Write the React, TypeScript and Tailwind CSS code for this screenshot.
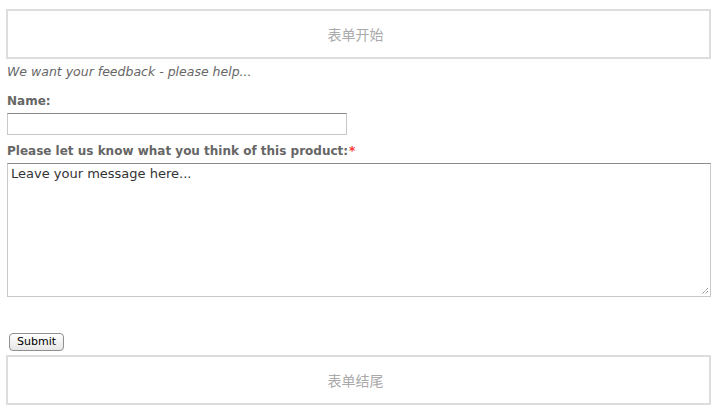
import React from "react";

export default function App() {
  return (
    <div className="w-[717px] h-[414px] bg-white overflow-hidden" style={{ fontFamily: '"DejaVu Sans", "Noto Sans CJK SC", sans-serif' }}>
      <div className="px-[6px] pt-[9px]">
        <div className="h-[50px] border-2 border-[#dddddd] flex items-center justify-center text-[14px] text-[#aaaaaa] w-[705px]" style={{ fontFamily: '"Noto Sans CJK SC", sans-serif' }}>
          <span className="mr-[6px]">表单开始</span>
        </div>
        <div className="pl-[1px] mt-[5px] text-[12.5px] leading-[16px] italic text-[#666666]">
          We want your feedback - please help...
        </div>
        <div className="pl-[1px] mt-[14px] text-[12px] leading-[15px] font-bold text-[#666666]">Name:</div>
        <div className="pl-[1px] mt-[4px]">
          <div className="w-[340px] h-[22px] border border-[#c8c8c8] border-t-[#8a8a8a]"></div>
        </div>
        <div className="pl-[1px] mt-[9px] text-[12px] leading-[15px] font-bold text-[#666666] flex">
          <span>Please let us know what you think of this product:</span>
          <span className="text-[#ff3333] ml-[1px]">*</span>
        </div>
        <div className="pl-[1px] mt-[4px]">
          <div className="relative w-[704px] h-[134px] border border-[#c8c8c8] border-t-[#8a8a8a] px-[3px] pt-[2px] text-[13px] leading-[16px] text-[#333333]">
            Leave your message here...
            <svg className="absolute right-[1px] bottom-[1px]" width="9" height="9" viewBox="0 0 9 9">
              <path d="M8 2 L2 8 M8 5 L5 8" stroke="#666" strokeWidth="1" strokeDasharray="1 1" />
            </svg>
          </div>
        </div>
        <div className="pl-[3px] mt-[36px] flex">
          <button className="h-[18px] px-[7px] rounded-[4px] border border-[#8f8f8f] bg-gradient-to-b from-white to-[#e6e6e6] text-[11px] leading-[14px] text-black">
            Submit
          </button>
        </div>
        <div className="mt-[4px] h-[50px] border-2 border-[#dddddd] flex items-center justify-center text-[14px] text-[#aaaaaa] w-[705px]" style={{ fontFamily: '"Noto Sans CJK SC", sans-serif' }}>
          <span className="mr-[6px]">表单结尾</span>
        </div>
      </div>
    </div>
  );
}
